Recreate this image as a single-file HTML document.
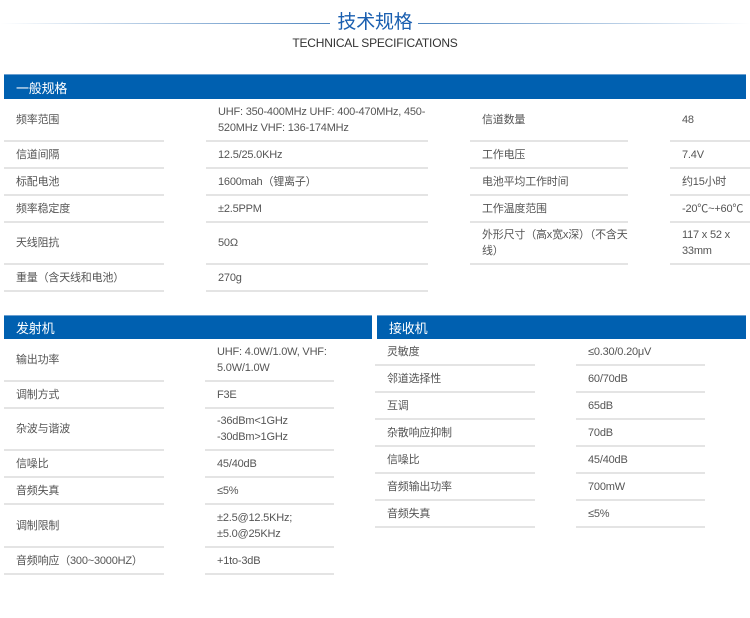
<!DOCTYPE html><html><head><meta charset="utf-8"><style>
body{margin:0;width:750px;height:618px;background:#fff;position:relative;overflow:hidden;font-family:"Liberation Sans","Noto Sans CJK SC",sans-serif;color:#555;font-size:11px;letter-spacing:-0.2px}
.c{position:absolute;display:flex;align-items:center;border-bottom:2px solid #e4e4e4;box-sizing:border-box;line-height:16px}
.c span{padding-left:12px}
.h{position:absolute;background:#0060b0;color:#fff;font-size:13px;display:flex;align-items:center;box-sizing:border-box;padding-left:12px;border-top:1px solid #6a9fd0}
</style></head><body>
<div style="position:absolute;left:0;top:23px;width:330px;height:1px;background:linear-gradient(90deg,#fff,#4f86c0)"></div>
<div style="position:absolute;left:418px;top:23px;width:332px;height:1px;background:linear-gradient(90deg,#4f86c0,#fff)"></div>
<div style="position:absolute;left:334px;top:10px;width:82px;text-align:center;color:#1a5fb0;font-size:19px;line-height:26px">技术规格</div>
<div style="position:absolute;left:0;top:36px;width:750px;text-align:center;color:#333;font-size:12px">TECHNICAL SPECIFICATIONS</div>

<div class="h" style="left:4px;top:74px;width:742px;height:25px">一般规格</div>
<div class="c" style="left:4px;top:99px;width:160px;height:43px"><span>频率范围</span></div>
<div class="c" style="left:206px;top:99px;width:222px;height:43px"><span>UHF: 350-400MHz UHF: 400-470MHz, 450-<br>520MHz VHF: 136-174MHz</span></div>
<div class="c" style="left:4px;top:142px;width:160px;height:27px"><span>信道间隔</span></div>
<div class="c" style="left:206px;top:142px;width:222px;height:27px"><span>12.5/25.0KHz</span></div>
<div class="c" style="left:4px;top:169px;width:160px;height:27px"><span>标配电池</span></div>
<div class="c" style="left:206px;top:169px;width:222px;height:27px"><span>1600mah（锂离子）</span></div>
<div class="c" style="left:4px;top:196px;width:160px;height:27px"><span>频率稳定度</span></div>
<div class="c" style="left:206px;top:196px;width:222px;height:27px"><span>±2.5PPM</span></div>
<div class="c" style="left:4px;top:223px;width:160px;height:42px"><span>天线阻抗</span></div>
<div class="c" style="left:206px;top:223px;width:222px;height:42px"><span>50Ω</span></div>
<div class="c" style="left:4px;top:265px;width:160px;height:27px"><span>重量（含天线和电池）</span></div>
<div class="c" style="left:206px;top:265px;width:222px;height:27px"><span>270g</span></div>
<div class="c" style="left:470px;top:99px;width:158px;height:43px"><span>信道数量</span></div>
<div class="c" style="left:670px;top:99px;width:80px;height:43px"><span>48</span></div>
<div class="c" style="left:470px;top:142px;width:158px;height:27px"><span>工作电压</span></div>
<div class="c" style="left:670px;top:142px;width:80px;height:27px"><span>7.4V</span></div>
<div class="c" style="left:470px;top:169px;width:158px;height:27px"><span>电池平均工作时间</span></div>
<div class="c" style="left:670px;top:169px;width:80px;height:27px"><span>约15小时</span></div>
<div class="c" style="left:470px;top:196px;width:158px;height:27px"><span>工作温度范围</span></div>
<div class="c" style="left:670px;top:196px;width:80px;height:27px"><span style="white-space:nowrap">-20℃~+60℃</span></div>
<div class="c" style="left:470px;top:223px;width:158px;height:42px"><span>外形尺寸（高x宽x深）（不含天线）</span></div>
<div class="c" style="left:670px;top:223px;width:80px;height:42px"><span>117 x 52 x 33mm</span></div>

<div class="h" style="left:4px;top:315px;width:368px;height:24px">发射机</div>
<div class="h" style="left:377px;top:315px;width:369px;height:24px">接收机</div>
<div class="c" style="left:4px;top:339px;width:160px;height:43px"><span>输出功率</span></div>
<div class="c" style="left:205px;top:339px;width:129px;height:43px"><span>UHF: 4.0W/1.0W, VHF: 5.0W/1.0W</span></div>
<div class="c" style="left:4px;top:382px;width:160px;height:27px"><span>调制方式</span></div>
<div class="c" style="left:205px;top:382px;width:129px;height:27px"><span>F3E</span></div>
<div class="c" style="left:4px;top:409px;width:160px;height:42px"><span>杂波与谐波</span></div>
<div class="c" style="left:205px;top:409px;width:129px;height:42px"><span>-36dBm&lt;1GHz<br>-30dBm&gt;1GHz</span></div>
<div class="c" style="left:4px;top:451px;width:160px;height:27px"><span>信噪比</span></div>
<div class="c" style="left:205px;top:451px;width:129px;height:27px"><span>45/40dB</span></div>
<div class="c" style="left:4px;top:478px;width:160px;height:27px"><span>音频失真</span></div>
<div class="c" style="left:205px;top:478px;width:129px;height:27px"><span>≤5%</span></div>
<div class="c" style="left:4px;top:505px;width:160px;height:43px"><span>调制限制</span></div>
<div class="c" style="left:205px;top:505px;width:129px;height:43px"><span>±2.5@12.5KHz;<br>±5.0@25KHz</span></div>
<div class="c" style="left:4px;top:548px;width:160px;height:27px"><span style="white-space:nowrap">音频响应（300~3000HZ）</span></div>
<div class="c" style="left:205px;top:548px;width:129px;height:27px"><span>+1to-3dB</span></div>
<div class="c" style="left:375px;top:339px;width:160px;height:27px"><span>灵敏度</span></div>
<div class="c" style="left:576px;top:339px;width:129px;height:27px"><span>≤0.30/0.20μV</span></div>
<div class="c" style="left:375px;top:366px;width:160px;height:27px"><span>邻道选择性</span></div>
<div class="c" style="left:576px;top:366px;width:129px;height:27px"><span>60/70dB</span></div>
<div class="c" style="left:375px;top:393px;width:160px;height:27px"><span>互调</span></div>
<div class="c" style="left:576px;top:393px;width:129px;height:27px"><span>65dB</span></div>
<div class="c" style="left:375px;top:420px;width:160px;height:27px"><span>杂散响应抑制</span></div>
<div class="c" style="left:576px;top:420px;width:129px;height:27px"><span>70dB</span></div>
<div class="c" style="left:375px;top:447px;width:160px;height:27px"><span>信噪比</span></div>
<div class="c" style="left:576px;top:447px;width:129px;height:27px"><span>45/40dB</span></div>
<div class="c" style="left:375px;top:474px;width:160px;height:27px"><span>音频输出功率</span></div>
<div class="c" style="left:576px;top:474px;width:129px;height:27px"><span>700mW</span></div>
<div class="c" style="left:375px;top:501px;width:160px;height:27px"><span>音频失真</span></div>
<div class="c" style="left:576px;top:501px;width:129px;height:27px"><span>≤5%</span></div>
</body></html>
